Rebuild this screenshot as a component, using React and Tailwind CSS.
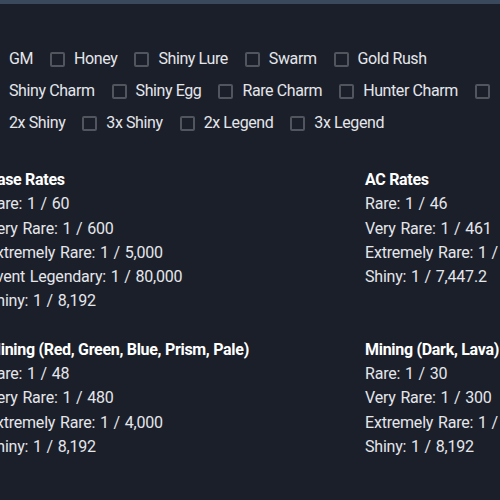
import React from "react";

const rows = [
  ["GM", "Honey", "Shiny Lure", "Swarm", "Gold Rush"],
  ["Shiny Charm", "Shiny Egg", "Rare Charm", "Hunter Charm", ""],
  ["2x Shiny", "3x Shiny", "2x Legend", "3x Legend"],
];

const sections = [
  [
    {
      title: "Base Rates",
      items: [
        "Rare: 1 / 60",
        "Very Rare: 1 / 600",
        "Extremely Rare: 1 / 5,000",
        "Event Legendary: 1 / 80,000",
        "Shiny: 1 / 8,192",
      ],
    },
    {
      title: "AC Rates",
      items: [
        "Rare: 1 / 46",
        "Very Rare: 1 / 461",
        "Extremely Rare: 1 / 3,846",
        "Shiny: 1 / 7,447.2",
      ],
    },
  ],
  [
    {
      title: "Mining (Red, Green, Blue, Prism, Pale)",
      items: [
        "Rare: 1 / 48",
        "Very Rare: 1 / 480",
        "Extremely Rare: 1 / 4,000",
        "Shiny: 1 / 8,192",
      ],
    },
    {
      title: "Mining (Dark, Lava)",
      items: [
        "Rare: 1 / 30",
        "Very Rare: 1 / 300",
        "Extremely Rare: 1 / 2,500",
        "Shiny: 1 / 8,192",
      ],
    },
  ],
];

function Check({ label }) {
  return (
    <label className="flex items-center gap-[9px] mr-[17px] shrink-0 tracking-[-0.4px]">
      <span className="w-[15px] h-[15px] border-2 border-[#50555e] rounded-[2px] shrink-0" />
      {label && <span className="whitespace-nowrap">{label}</span>}
    </label>
  );
}

function Section({ s, first }) {
  return (
    <div className={first ? "w-[378px] shrink-0" : "shrink-0"}>
      <div className="font-bold text-white whitespace-nowrap tracking-[-0.3px]">{s.title}</div>
      {s.items.map((t) => (
        <div key={t} className="whitespace-nowrap tracking-[-0.2px] [word-spacing:1px]">{t}</div>
      ))}
    </div>
  );
}

export default function App() {
  return (
    <div
      className="w-[500px] h-[500px] overflow-hidden bg-[#1b1f2a] text-[#e4e6ea] text-[16px] leading-[24.3px]"
      style={{ fontFamily: "Roboto, 'Noto Sans', sans-serif" }}
    >
      <div className="h-[4px] bg-[#3a495c]" />
      <div className="ml-[-15px] pt-[43px] flex flex-col gap-[8px]">
        {rows.map((r, i) => (
          <div key={i} className="flex items-center h-[24px]">
            {r.map((l, j) => (
              <Check key={j} label={l} />
            ))}
          </div>
        ))}
      </div>
      <div className="ml-[-13px] mt-[33px] flex flex-col gap-[24px]">
        {sections.map((row, i) => (
          <div key={i} className="flex">
            {row.map((s, j) => (
              <Section key={s.title} s={s} first={j === 0} />
            ))}
          </div>
        ))}
      </div>
    </div>
  );
}
